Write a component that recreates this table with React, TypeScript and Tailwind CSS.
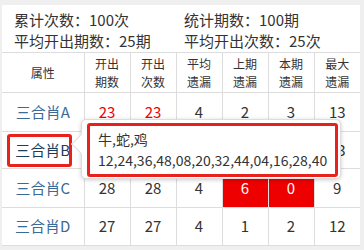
import React from "react";

type Row = {
  name: string;
  cells: Array<number>;
  red?: number[]; // columns with red text
  hot?: number[]; // columns with red background
  active?: boolean;
  h: string;
};

const HEADERS = [
  ["开出", "期数"],
  ["开出", "次数"],
  ["平均", "遗漏"],
  ["上期", "遗漏"],
  ["本期", "遗漏"],
  ["最大", "遗漏"],
];

const ROWS: Row[] = [
  { name: "三合肖A", cells: [23, 23, 4, 2, 3, 13], red: [0, 1], h: "h-[39px]" },
  { name: "三合肖B", cells: [22, 22, 4, 1, 1, 13], active: true, h: "h-[37px]" },
  { name: "三合肖C", cells: [28, 28, 4, 6, 0, 9], hot: [3, 4], h: "h-[39px]" },
  { name: "三合肖D", cells: [27, 27, 4, 1, 2, 12], h: "h-[38px]" },
];

const FONT = { fontFamily: '"Noto Sans CJK SC", "Noto Sans", sans-serif' };

export default function App() {
  return (
    <div className="h-[250px] w-[364px] overflow-hidden bg-[#efefef] pt-[5px] pl-[2px]" style={FONT}>
      <div className="relative h-[240px] w-[358px] bg-white text-[#333]">
        {/* stats */}
        <div className="grid h-[47px] grid-cols-[170px_1fr] pl-[12px] pt-[5px] text-[15px] leading-[20px]">
          <div>累计次数：100次</div>
          <div>统计期数：100期</div>
          <div>平均开出期数：25期</div>
          <div>平均开出次数：25次</div>
        </div>

        <table className="w-[358px] table-fixed border-collapse text-center">
          <colgroup>
            <col className="w-[82px]" />
            {HEADERS.map((_, i) => (
              <col key={i} className="w-[46px]" />
            ))}
          </colgroup>
          <thead>
            <tr className="h-[40px] border-y border-[#ddd]">
              <th className="border-r border-[#ddd] text-[12px] font-normal">属性</th>
              {HEADERS.map(([a, b], i) => (
                <th key={i} className="border-r border-[#ddd] text-[12px] font-normal leading-[18px] last:border-r-0">
                  {a}
                  <br />
                  {b}
                </th>
              ))}
            </tr>
          </thead>
          <tbody>
            {ROWS.map((row) => (
              <tr key={row.name} className={`${row.h} border-b border-[#ddd]`}>
                <td className="border-r border-[#ddd] text-[15px]">
                  <span className={row.active ? "text-[#1d3d5c]" : "text-[#3a6a96]"}>{row.name}</span>
                </td>
                {row.cells.map((v, i) => (
                  <td
                    key={i}
                    className={`border-r border-[#ddd] text-[15px] last:border-r-0 ${
                      row.hot?.includes(i) ? "bg-[#ee0000] text-white" : row.red?.includes(i) ? "text-[#e00]" : ""
                    }`}
                  >
                    {v}
                  </td>
                ))}
              </tr>
            ))}
          </tbody>
        </table>

        {/* highlight around hovered name */}
        <div className="absolute left-[5px] top-[129px] h-[33px] w-[65px] rounded-[3px] border-[3px] border-[#e8211d]" />

        {/* tooltip */}
        <div className="absolute left-[79px] top-[114px] h-[60px] w-[260px] rounded-[5px] border border-[#ddd] bg-white shadow-[0_1px_4px_rgba(0,0,0,0.2)]">
          <div className="absolute -left-[8px] top-[17px] h-[14px] w-[14px] rotate-45 border-b border-l border-[#ddd] bg-white" />
          <div className="absolute left-[5px] top-[3px] h-[54px] w-[251px] rounded-[3px] border-[3px] border-[#e8211d] px-[8px] pt-[3px] text-[14px] leading-[21px] text-[#333]">
            <div>牛,蛇,鸡</div>
            <div>12,24,36,48,08,20,32,44,04,16,28,40</div>
          </div>
        </div>
      </div>
    </div>
  );
}
